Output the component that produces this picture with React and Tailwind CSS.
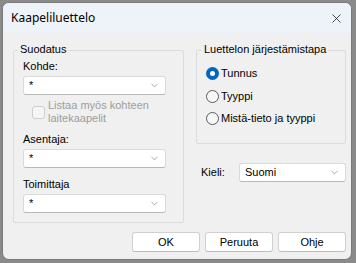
import { ChevronDown, X } from "lucide-react";

function Combo({ value, className = "" }) {
  return (
    <div
      className={`flex h-[19px] items-center justify-between rounded-[3px] border border-[#dadada] border-b-[#b8b8b8] bg-white pl-[5px] pr-[5px] ${className}`}
    >
      <span className="text-[11px] leading-none">{value}</span>
      <ChevronDown size={11} strokeWidth={1.2} className="text-[#606060]" />
    </div>
  );
}

function Radio({ label, checked, className = "" }) {
  return (
    <div className={`flex items-center ${className}`}>
      {checked ? (
        <span className="flex h-[13px] w-[13px] items-center justify-center rounded-full bg-[#0067c0]">
          <span className="h-[5px] w-[5px] rounded-full bg-white" />
        </span>
      ) : (
        <span className="h-[13px] w-[13px] rounded-full border border-[#5a5a5a] bg-[#f7f7f7]" />
      )}
      <span className="ml-[2px] text-[11px] leading-none">{label}</span>
    </div>
  );
}

function Button({ children }) {
  return (
    <button className="h-[20px] w-[68px] rounded-[3px] border border-[#d0d0d0] border-b-[#bcbcbc] bg-white text-[11px] leading-none text-black">
      {children}
    </button>
  );
}

export default function App() {
  return (
    <div className="h-[263px] w-[356px] bg-[#8a8a8a] pl-[2px] pt-[2px] font-['Liberation_Sans',Arial,sans-serif] text-black">
      <div className="flex h-[258px] w-[350px] flex-col overflow-hidden rounded-[7px] border border-[#7a7a7a] bg-[#f0f0f0]">
        <div className="flex h-[30px] shrink-0 items-center justify-between bg-[#eef3f9] pl-[8px] pr-[5px]">
          <span className="font-['Noto_Sans',sans-serif] text-[12px] leading-none">Kaapeliluettelo</span>
          <X size={15} strokeWidth={1.1} className="mr-[2px]" />
        </div>

        <div className="flex flex-1 flex-col pl-[10px] pr-[5px]">
          <div className="mt-[17px] flex">
            <div className="relative h-[173px] w-[171px] rounded-[2px] border border-[#dcdcdc] pl-[9px]">
              <span className="absolute -top-[7px] left-[4px] bg-[#f0f0f0] px-[2px] text-[11px] leading-none">
                Suodatus
              </span>
              <div className="mt-[10px] text-[11px] leading-none">Kohde:</div>
              <Combo value="*" className="mt-[4px] w-[143px]" />
              <div className="ml-[9px] mt-[4px] flex">
                <span className="mt-[7px] h-[13px] w-[13px] shrink-0 rounded-[3px] border border-[#cfcfcf] bg-[#f6f6f6]" />
                <span className="ml-[3px] text-[11px] leading-[13px] text-[#9d9d9d]">
                  Listaa myös kohteen
                  <br />
                  laitekaapelit
                </span>
              </div>
              <div className="mt-[9px] text-[11px] leading-none">Asentaja:</div>
              <Combo value="*" className="mt-[4px] w-[143px]" />
              <div className="mt-[11px] text-[11px] leading-none">Toimittaja</div>
              <Combo value="*" className="mt-[4px] w-[143px]" />
            </div>

            <div className="ml-[12px] flex flex-col">
              <div className="relative h-[94px] w-[150px] rounded-[2px] border border-[#dcdcdc] pl-[9px]">
                <span className="absolute -top-[7px] left-[5px] bg-[#f0f0f0] px-[2px] text-[11px] leading-none">
                  Luettelon järjestämistapa
                </span>
                <Radio label="Tunnus" checked className="mt-[16px]" />
                <Radio label="Tyyppi" className="mt-[10px]" />
                <Radio label="Mistä-tieto ja tyyppi" className="mt-[9px]" />
              </div>
              <div className="mt-[19px] flex items-center">
                <span className="ml-[5px] w-[38px] text-[11px] leading-none">Kieli:</span>
                <Combo value="Suomi" className="w-[107px]" />
              </div>
            </div>
          </div>

          <div className="mt-[9px] flex justify-end gap-[5px]">
            <Button>OK</Button>
            <Button>Peruuta</Button>
            <Button>Ohje</Button>
          </div>
        </div>
      </div>
    </div>
  );
}
